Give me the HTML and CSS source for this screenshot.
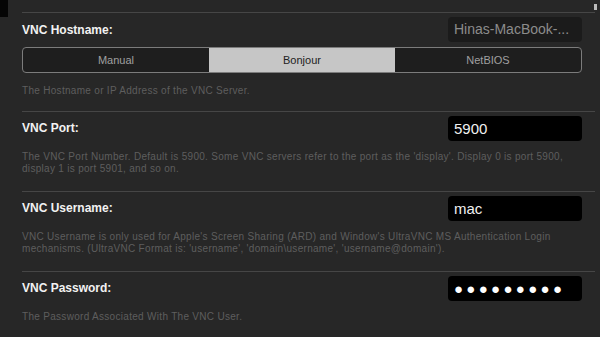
FILE: index.html
```html
<html>
    <head>
        <link rel="stylesheet" href="styles.css">
        <title>VNC Settings</title>
    </head>
    <body>
        <div class="corner"></div>
        <div class="scrollmark"></div>
        <div class="settings">
            <div class="section">
                <div class="row">
                    <span class="label">VNC Hostname:</span>
                    <span class="field dim">Hinas-MacBook-...</span>
                </div>
                <div class="segmented">
                    <div class="segment">Manual</div>
                    <div class="segment selected">Bonjour</div>
                    <div class="segment">NetBIOS</div>
                </div>
                <p class="help first">The Hostname or IP Address of the VNC Server.</p>
            </div>
            <div class="section">
                <div class="row">
                    <span class="label">VNC Port:</span>
                    <span class="field">5900</span>
                </div>
                <p class="help">The VNC Port Number. Default is 5900. Some VNC servers refer to the port as the 'display'. Display 0 is port 5900, display 1 is port 5901, and so on.</p>
            </div>
            <div class="section">
                <div class="row">
                    <span class="label">VNC Username:</span>
                    <span class="field">mac</span>
                </div>
                <p class="help">VNC Username is only used for Apple's Screen Sharing (ARD) and Window's UltraVNC MS Authentication Login mechanisms. (UltraVNC Format is: 'username', 'domain\username', 'username@domain').</p>
            </div>
            <div class="section">
                <div class="row">
                    <span class="label">VNC Password:</span>
                    <span class="field dots">●●●●●●●●●</span>
                </div>
                <p class="help">The Password Associated With The VNC User.</p>
            </div>
        </div>
    </body>
</html>
```
FILE: styles.css
```css
body        {margin: 0;
             background-color: #272727;
             font-family: "Liberation Sans", Arial, sans-serif;
             overflow: hidden;}
.corner     {position: absolute; left: 0; top: 0;
             width: 8px; height: 17px;
             background-color: #050505;}
.scrollmark {position: absolute; right: 3px; top: 4px;
             width: 3px; height: 6px;
             background-color: #bbbbbb;}
.settings   {margin-left: 22px;
             width: 573px;
             padding-top: 12px;}
.section    {border-top: 1px solid #464646;
             padding: 4px 13px 15px 0;}
.row        {display: flex;
             justify-content: space-between;
             align-items: center;
             height: 25px;}
.label      {color: #f2f2f2;
             font-size: 12px;
             font-weight: bold;}
.field      {width: 128px;
             height: 25px;
             line-height: 25px;
             padding-left: 6px;
             border-radius: 4px;
             background-color: #000000;
             color: #f0f0f0;
             font-size: 15px;}
.field.dim  {background-color: #1b1b1b;
             color: #8c8c8c;
             font-size: 14px;}
.field.dots {font-size: 15px;
             letter-spacing: 3.3px;
             color: #ffffff;}
.segmented  {display: flex;
             margin-top: 5px;
             height: 24px;
             border: 1px solid #7c7c7c;
             border-radius: 4px;
             overflow: hidden;
             background-color: #1e1e1e;}
.segment    {flex: 1;
             text-align: center;
             line-height: 24px;
             font-size: 11px;
             color: #a0a0a0;}
.selected   {background-color: #c6c6c6;
             color: #222222;}
.help       {margin: 10px 0 0 0;
             font-size: 10px;
             letter-spacing: 0.3px;
             line-height: 12.5px;
             color: #5e5e5e;}
.help.first {margin-top: 12px;}
.section:first-child {padding-bottom: 13px;}
```
